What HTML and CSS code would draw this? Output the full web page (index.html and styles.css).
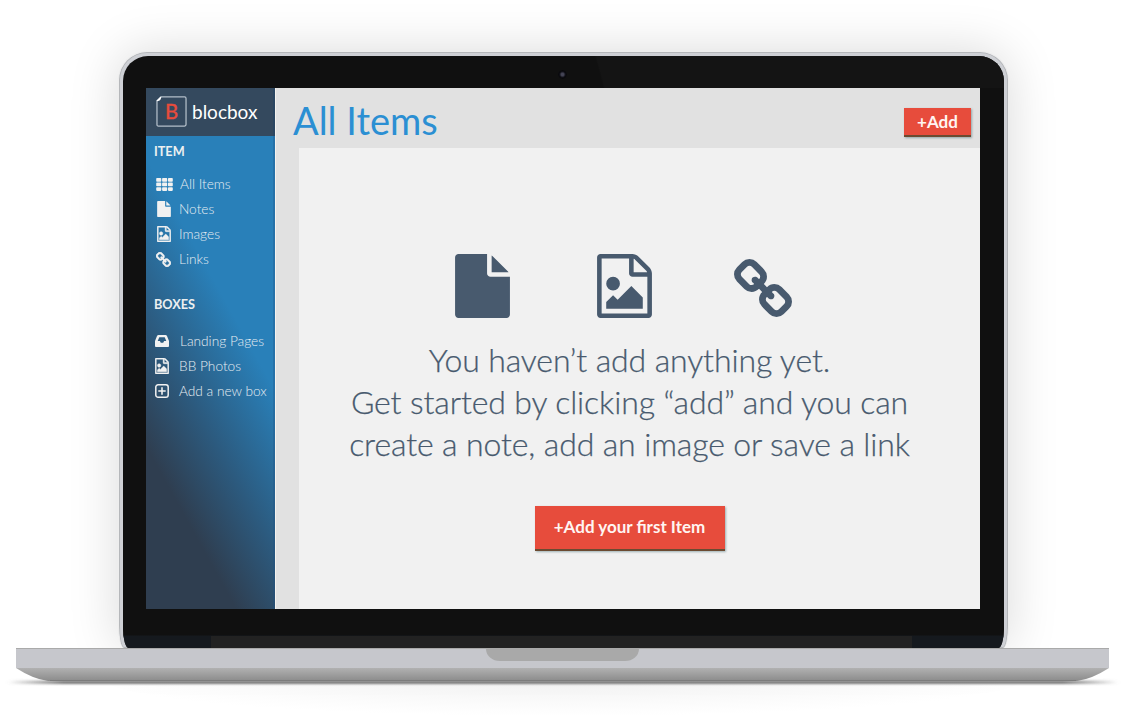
FILE: index.html
```html
<!DOCTYPE html>
<html lang="en">
<head>
<meta charset="utf-8">
<title>blocbox</title>
<link rel="stylesheet" href="styles.css">
</head>
<body>
<svg class="defs" aria-hidden="true">
  <symbol id="file" viewBox="128 0 1536 1792"><path d="M1152 512v-472q22 14 36 28l408 408q14 14 28 36h-472zm-128 32q0 40 28 68t68 28h544v1056q0 40-28 68t-68 28h-1344q-40 0-68-28t-28-68v-1600q0-40 28-68t68-28h800v544z"/></symbol>
  <symbol id="image" viewBox="128 0 1536 1792"><path d="M1596 380q28 28 48 76t20 88v1152q0 40-28 68t-68 28h-1344q-40 0-68-28t-28-68v-1600q0-40 28-68t68-28h896q40 0 88 20t76 48zm-444-244v376h376q-10-29-22-41l-313-313q-12-12-41-22zm384 1528v-1024h-416q-40 0-68-28t-28-68v-416h-768v1536h1280zm-128-448v320h-1024v-192l192-192 128 128 384-384zm-832-192q-80 0-136-56t-56-136 56-136 136-56 136 56 56 136-56 136-136 56z"/></symbol>
  <symbol id="link" viewBox="16 16 1632 1632"><path d="M1456 1216q0-40-28-68l-208-208q-28-28-68-28-42 0-72 32 3 3 19 18.500t21.500 21.500 15 19 13 25.500 3.500 27.500q0 40-28 68t-68 28q-15 0-27.500-3.500t-25.500-13-19-15-21.500-21.500-18.500-19q-33 31-33 73 0 40 28 68l206 207q27 27 68 27 40 0 68-26l147-146q28-28 28-67zm-703-705q0-40-28-68l-206-207q-28-28-68-28-39 0-68 27l-147 146q-28 28-28 67 0 40 28 68l208 208q27 27 68 27 42 0 72-31-3-3-19-18.500t-21.500-21.500-15-19-13-25.500-3.500-27.500q0-40 28-68t68-28q15 0 27.500 3.500t25.500 13 19 15 21.500 21.500 18.500 19q33-31 33-73zm895 705q0 120-85 203l-147 146q-83 83-203 83-121 0-204-85l-206-207q-83-83-83-203 0-123 88-209l-88-88q-86 88-208 88-120 0-204-84l-208-208q-84-84-84-204t85-203l147-146q83-83 203-83 121 0 204 85l206 207q83 83 83 203 0 123-88 209l88 88q86-88 208-88 120 0 204 84l208 208q84 84 84 204z"/></symbol>
  <symbol id="grid" viewBox="0 0 17 13"><path d="M1 0h3.500q.8 0 .8.800v2.100q0 .8-.8.800H1q-.8 0-.8-.8V.8Q.2 0 1 0zm5.900 0h3.500q.8 0 .8.800v2.100q0 .8-.8.800H6.900q-.8 0-.8-.8V.8q0-.8.8-.8zm5.900 0h3.200q.8 0 .8.800v2.100q0 .8-.8.800h-3.200q-.8 0-.8-.8V.8q0-.8.8-.8zM1 4.600h3.500q.8 0 .8.800v2.100q0 .8-.8.800H1q-.8 0-.8-.8V5.400q0-.8.800-.8zm5.900 0h3.500q.8 0 .8.800v2.100q0 .8-.8.800H6.900q-.8 0-.8-.8V5.400q0-.8.800-.8zm5.900 0h3.200q.8 0 .8.800v2.100q0 .8-.8.800h-3.200q-.8 0-.8-.8V5.400q0-.8.800-.8zM1 9.200h3.500q.8 0 .8.800v2.100q0 .8-.8.800H1q-.8 0-.8-.8V10q0-.8.800-.8zm5.900 0h3.500q.8 0 .8.800v2.100q0 .8-.8.800H6.900q-.8 0-.8-.8V10q0-.8.800-.8zm5.900 0h3.200q.8 0 .8.800v2.100q0 .8-.8.800h-3.200q-.8 0-.8-.8V10q0-.8.800-.8z"/></symbol>
  <symbol id="inbox" viewBox="0 0 14 12"><path fill-rule="evenodd" d="M3.500 0h7q1 0 1.500 1l2 5v5q0 .9-.9.900H.9Q0 11.900 0 11V6l2-5q.5-1 1.500-1zm.8 2.300L2.700 6h2.200l.9 1.800h2.400L9.100 6h2.200L9.700 2.300z"/></symbol>
  <symbol id="plus" viewBox="0 0 14 14"><rect x=".8" y=".8" width="12.400" height="12.400" rx="2.300" fill="none" stroke="currentColor" stroke-width="1.500"/><path d="M6.200 3.300h1.600v2.900h2.900v1.600H7.800v2.900H6.200V7.800H3.300V6.200h2.900z"/></symbol>
</svg>
<div class="laptop">
  <div class="lid">
    <div class="bezel">
      <div class="camera-bar"><span class="camera"></span></div>
      <div class="screen">
        <aside class="sidebar">
          <div class="brand">
            <svg class="logo" viewBox="0 0 32 32"><path d="M5 1h24.500q1.500 0 1.500 1.500v27q0 1.500-1.500 1.500H2.500Q1 31 1 29.500V5z" fill="none" stroke="#b3bec9" stroke-width="1.300"/><path d="M1 5l4-4-1 3z" fill="#fff" stroke="#fff"/><text class="logo-letter" x="16" y="23.500" text-anchor="middle">B</text></svg>
            <span class="brand-name">blocbox</span>
          </div>
          <nav class="menu">
            <h2 class="heading">ITEM</h2>
            <a class="entry"><span class="slot"><svg class="i-grid"><use href="#grid"/></svg></span><span class="t1">All Items</span></a>
            <a class="entry"><span class="slot"><svg class="i-file"><use href="#file"/></svg></span><span class="t2">Notes</span></a>
            <a class="entry"><span class="slot"><svg class="i-file bold"><use href="#image"/></svg></span><span class="t2">Images</span></a>
            <a class="entry"><span class="slot"><svg class="i-link bold"><use href="#link"/></svg></span><span class="t2">Links</span></a>
            <h2 class="heading boxes">BOXES</h2>
            <a class="entry"><span class="slot"><svg class="i-inbox"><use href="#inbox"/></svg></span><span class="t1">Landing Pages</span></a>
            <a class="entry"><span class="slot"><svg class="i-file bold"><use href="#image"/></svg></span><span class="t2">BB Photos</span></a>
            <a class="entry"><span class="slot"><svg class="i-plus"><use href="#plus"/></svg></span><span class="t2">Add a new box</span></a>
          </nav>
        </aside>
        <main class="main">
          <header class="topbar"><h1 class="title">All Items</h1><button class="button add">+Add</button></header>
          <section class="panel">
            <div class="art">
              <svg class="a-file"><use href="#file"/></svg>
              <svg class="a-file"><use href="#image"/></svg>
              <svg class="a-link"><use href="#link"/></svg>
            </div>
            <p class="message"><span>You haven’t add anything yet.</span><span>Get started by clicking “add” and you can</span><span>create a note, add an image or save a link</span></p>
            <button class="button first">+Add your first Item</button>
          </section>
        </main>
      </div>
      <div class="chin"><div class="hinge"></div></div>
    </div>
  </div>
  <div class="deck"><div class="notch"></div></div>
  <svg class="underside" viewBox="0 0 1124 20">
    <defs>
      <linearGradient id="metal" x1="0" y1="0" x2="0" y2="1"><stop offset="0" stop-color="#b1b1b1"/><stop offset="1" stop-color="#8b8b8b"/></linearGradient>
      <linearGradient id="fade"><stop offset="0" stop-color="#777" stop-opacity="0"/><stop offset=".05" stop-color="#777"/><stop offset=".95" stop-color="#777"/><stop offset="1" stop-color="#777" stop-opacity="0"/></linearGradient>
      <filter id="soft" x="-5%" y="-200%" width="110%" height="500%"><feGaussianBlur stdDeviation="2 .8"/></filter>
    </defs>
    <rect x="8" y="12.500" width="1110" height="3.500" fill="url(#fade)" filter="url(#soft)"/>
    <path d="M16 0h1093q-17 11-32 13H48Q33 11 16 0z" fill="url(#metal)"/>
    <path d="M50 12.500h1026" stroke="#7c7c7c"/>
  </svg>
</div>
</body>
</html>
```
FILE: styles.css
```css
* { box-sizing: border-box; }
body { margin: 0; background: #fff; font-family: Lato, "Open Sans", sans-serif; }
h1, h2, p { margin: 0; font-weight: inherit; }
svg { display: block; fill: currentColor; }
.defs { display: none; }
.laptop { width: 1124px; height: 715px; padding-top: 51px; overflow: hidden; display: flex; flex-direction: column; background: radial-gradient(ellipse 450px 34px at 562px 682px, #f3f3f3, #fff); }
.lid { width: 891px; height: 597px; flex: none; margin-left: 118px; padding: 4px; border: 1px solid #eee; border-bottom: 0; border-radius: 29px 29px 6px 6px / 29px 29px 22px 22px; background: #ced0d5; box-shadow: inset 0 0 0 1px #b5b7ba, 0 0 50px rgba(0,0,0,.15); }
.bezel { height: 592px; border-radius: 25px 25px 6px 6px / 25px 25px 20px 20px; background: #101010; overflow: hidden; }
.camera-bar { height: 32px; padding: 14px 0 0 435px; background: linear-gradient(75deg, transparent 54%, #141414 54.200%); }
.camera { display: block; width: 9px; height: 9px; border-radius: 50%; background: radial-gradient(#444455 0 20%, #111118 45%, #08080b 60%, #1c1c1c); }
.screen { display: flex; width: 834px; height: 521px; margin-left: 23px; background: #e1e1e1; }
.sidebar { width: 129px; flex: none; display: flex; flex-direction: column; background: #34495e; color: #e6edf2; }
.brand { height: 48px; padding: 0 0 1px 10px; display: flex; align-items: center; background: #34495e; border-right: 2px solid #2b4661; }
.logo { width: 31px; height: 31px; }
.logo-letter { font-size: 21px; fill: #e74c3c; stroke: #e74c3c; stroke-width: .4px; }
.brand-name { margin: 0 0 0 5px; font-size: 19px; color: #fff; }
.menu { flex: 1; padding-left: 8px; border-right: 2px solid rgba(30,80,130,.3); background: linear-gradient(241deg, #2980b9 0 36%, #2c5a7e 59%, #2f3e50 77%) border-box; }
.heading { height: 35px; padding-top: 7px; line-height: 17px; font-size: 12.700px; font-weight: 700; color: #ecf0f1; white-space: nowrap; }
.heading.boxes { height: 57px; padding-top: 25px; }
.entry { height: 25px; display: flex; align-items: center; font-size: 13.700px; font-weight: 300; white-space: nowrap; }
.slot { width: 25px; display: flex; padding: 1px 0 0 3px; color: #f1f1f1; }
.boxes ~ .entry .slot { padding-left: 1px; }
.t1 { margin-left: 1px; }
.bold { stroke: currentColor; stroke-width: 50px; overflow: visible; }
.i-grid { width: 17px; height: 13px; margin-left: -1px; }
.i-file { width: 14px; height: 16px; }
.i-link { width: 15px; height: 15px; margin-left: -1px; }
.i-inbox { width: 14px; height: 12px; }
.i-plus { width: 14px; height: 14px; }
.main { flex: 1; padding-left: 24px; border-left: 1px solid #f5f2ee; }
.topbar { height: 60px; display: flex; align-items: center; justify-content: space-between; padding: 9px 9px 0 0; margin-left: -7px; }
.title { margin-top: -6px; font-size: 38px; line-height: 46px; color: #2b8fd3; white-space: nowrap; }
.button { border: 0; border-bottom: 2px solid #6b4b32; padding: 0; background: #e74c3c; color: #fff5f2; font-family: Lato, sans-serif; font-weight: 700; white-space: nowrap; box-shadow: 1px 1px 2px rgba(0,60,70,.35); }
.add { width: 67px; height: 29px; font-size: 17px; }
.panel { height: 461px; padding-top: 106px; margin-left: -1px; background: #f1f1f1; display: flex; flex-direction: column; align-items: center; }
.art { display: flex; align-items: center; gap: 87px; margin-right: 32px; color: #485a6e; }
.a-file { width: 55px; height: 64px; }
.a-link { width: 58px; height: 58px; margin: 3px 0 0 -5px; }
.message { width: 562px; margin: 21px 0 0 -20px; color: #485a6e; -webkit-text-stroke: .25px #485a6e; font-size: 32px; font-weight: 300; letter-spacing: -.12px; line-height: 42px; white-space: nowrap; display: flex; flex-direction: column; align-items: center; }
.first { width: 190px; height: 45px; margin: 41px 20px 0 0; padding-bottom: 2px; font-size: 17px; }
.chin { height: 39px; padding: 27px 0 0 88px; background: linear-gradient(#101010 26px, #15191e 27px); }
.hinge { width: 701px; height: 12px; background: #222; }
.deck { height: 20px; width: 1093px; flex: none; margin-left: 16px; border-top: 1px solid #aaa; background: #c6c7cc; z-index: 1; }
.notch { width: 153px; height: 12px; margin-left: 470px; border-radius: 0 0 14px 14px / 0 0 12px 12px; background: #a9a9a9; }
.underside { width: 1124px; height: 20px; flex: none; z-index: 1; overflow: visible; }
```
